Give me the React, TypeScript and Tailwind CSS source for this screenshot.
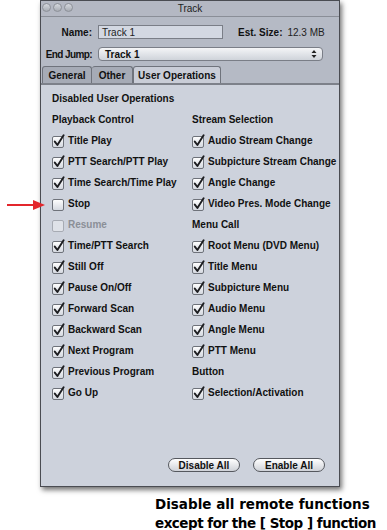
const leftItems: { label: string; checked: boolean; disabled?: boolean }[] = [
  { label: 'Title Play', checked: true },
  { label: 'PTT Search/PTT Play', checked: true },
  { label: 'Time Search/Time Play', checked: true },
  { label: 'Stop', checked: false },
  { label: 'Resume', checked: false, disabled: true },
  { label: 'Time/PTT Search', checked: true },
  { label: 'Still Off', checked: true },
  { label: 'Pause On/Off', checked: true },
  { label: 'Forward Scan', checked: true },
  { label: 'Backward Scan', checked: true },
  { label: 'Next Program', checked: true },
  { label: 'Previous Program', checked: true },
  { label: 'Go Up', checked: true },
];

type RightRow = { header: string } | { label: string };

const rightItems: RightRow[] = [
  { header: 'Stream Selection' },
  { label: 'Audio Stream Change' },
  { label: 'Subpicture Stream Change' },
  { label: 'Angle Change' },
  { label: 'Video Pres. Mode Change' },
  { header: 'Menu Call' },
  { label: 'Root Menu (DVD Menu)' },
  { label: 'Title Menu' },
  { label: 'Subpicture Menu' },
  { label: 'Audio Menu' },
  { label: 'Angle Menu' },
  { label: 'PTT Menu' },
  { header: 'Button' },
  { label: 'Selection/Activation' },
];

function CheckBox({ checked, disabled }: { checked: boolean; disabled?: boolean }) {
  return (
    <svg width="14" height="14" viewBox="0 0 14 14" className="shrink-0">
      <defs>
        <linearGradient id="cbg" x1="0" y1="0" x2="0" y2="1">
          <stop offset="0" stopColor="#ffffff" />
          <stop offset="1" stopColor="#d3d7df" />
        </linearGradient>
      </defs>
      <rect
        x="0.5"
        y="2.5"
        width="11"
        height="11"
        rx="1.5"
        fill={disabled ? '#dfe2e8' : 'url(#cbg)'}
        stroke={disabled ? '#a7abb3' : '#6e727a'}
      />
      {checked && (
        <path
          d="M2.8 7.6 L5.4 11 L11.6 1.2"
          fill="none"
          stroke="#1c1d20"
          strokeWidth="1.9"
          strokeLinecap="round"
          strokeLinejoin="round"
        />
      )}
    </svg>
  );
}

function Row({ label, checked, disabled }: { label: string; checked: boolean; disabled?: boolean }) {
  return (
    <div className="flex h-[21px] items-center gap-[2px] whitespace-nowrap">
      <CheckBox checked={checked} disabled={disabled} />
      <span className={disabled ? 'text-[#8b8f97]' : 'text-[#111]'}>{label}</span>
    </div>
  );
}

function Header({ children }: { children: string }) {
  return <div className="flex h-[21px] items-center whitespace-nowrap text-[#111]">{children}</div>;
}

export default function App() {
  return (
    <div className="relative h-[530px] w-[387px] overflow-hidden bg-white font-['Liberation_Sans',Arial,sans-serif] text-[10px]">
      <div className="ml-[40px] flex h-[487px] w-[300px] flex-col border border-[#4a4c52] bg-[#cdd2dc] shadow-[2px_3px_5px_rgba(0,0,0,0.55)]">
        {/* title bar */}
        <div className="relative flex h-[16px] items-center justify-center border-b border-[#8a8e97] bg-[#b4b8c3]">
          <div className="absolute left-[1px] top-[2px] flex gap-[2px]">
            {[0, 1, 2].map((i) => (
              <span
                key={i}
                className="h-[9px] w-[9px] rounded-full border border-[#8c9098] bg-gradient-to-b from-[#d6d9df] to-[#a7abb3]"
              />
            ))}
          </div>
          <span className="text-[#222]">Track</span>
        </div>

        {/* header fields */}
        <div className="bg-[#b5bac5] pt-[8px]">
          <div className="flex h-[14px] items-center whitespace-nowrap">
            <span className="w-[57px] shrink-0 pr-[6px] text-right font-bold text-[#111]">Name:</span>
            <div className="flex h-[14px] w-[125px] shrink-0 items-center border border-[#7a7e87] bg-[#d3d8e2] pl-[3px] text-[#222]">
              Track 1
            </div>
            <span className="ml-[15px] font-bold text-[#111]">Est. Size:</span>
            <span className="ml-[5px] text-[#222]">12.3 MB</span>
          </div>
          <div className="mt-[8px] flex h-[14px] items-center whitespace-nowrap">
            <span className="w-[57px] shrink-0 pr-[6px] text-right font-bold tracking-[-0.6px] text-[#111]">
              End Jump:
            </span>
            <div className="flex h-[14px] w-[225px] shrink-0 items-center justify-between rounded-[4px] border border-[#7a7e87] bg-gradient-to-b from-[#f4f5f7] to-[#cfd3da] pl-[6px] pr-[5px] font-bold text-[#111]">
              <span>Track 1</span>
              <svg width="6" height="10" viewBox="0 0 6 10">
                <path d="M3 1 L5.5 4 L0.5 4 Z M3 9 L5.5 6 L0.5 6 Z" fill="#222" />
              </svg>
            </div>
          </div>
          <div className="mt-[5px] flex h-[19px] items-end border-b-2 border-[#7d818a] pl-[1px]">
            <div className="flex h-[17px] w-[50px] items-center justify-center rounded-t-[3px] border border-b-0 border-[#6f737c] bg-[#a6abb6] font-bold text-[#111]">
              General
            </div>
            <div className="flex h-[17px] w-[41px] items-center justify-center rounded-t-[3px] border border-b-0 border-l-0 border-[#6f737c] bg-[#a6abb6] font-bold text-[#111]">
              Other
            </div>
            <div className="flex h-[17px] w-[88px] items-center justify-center rounded-t-[3px] border border-b-0 border-[#6f737c] bg-[#c9cdd7] font-bold text-[#111]">
              User Operations
            </div>
          </div>
        </div>

        {/* content */}
        <div className="flex flex-1 flex-col pl-[11px] pr-[10px] pt-[3px] font-bold">
          <Header>Disabled User Operations</Header>
          <div className="flex">
            <div className="w-[140px] shrink-0">
              <Header>Playback Control</Header>
              {leftItems.map((it) => (
                <Row key={it.label} label={it.label} checked={it.checked} disabled={it.disabled} />
              ))}
            </div>
            <div>
              {rightItems.map((it) =>
                'header' in it ? (
                  <Header key={it.header}>{it.header}</Header>
                ) : (
                  <Row key={it.label} label={it.label} checked />
                ),
              )}
            </div>
          </div>
          <div className="flex-1" />
          <div className="mb-[14px] mr-[4px] flex justify-end gap-[13px]">
            <button className="flex h-[14px] w-[72px] items-center justify-center rounded-full border border-[#55585e] bg-gradient-to-b from-[#ffffff] to-[#cfd2d8] font-bold text-[#111]">
              Disable All
            </button>
            <button className="flex h-[14px] w-[72px] items-center justify-center rounded-full border border-[#55585e] bg-gradient-to-b from-[#ffffff] to-[#cfd2d8] font-bold text-[#111]">
              Enable All
            </button>
          </div>
        </div>
      </div>

      <div className="ml-[155px] mt-[8px] whitespace-nowrap font-['DejaVu_Sans',sans-serif] text-[13.5px] font-bold leading-[19px] text-black">
        <div>Disable all remote functions</div>
        <div className="tracking-[-0.5px]">except for the [ Stop ] function</div>
      </div>

      {/* annotation arrow */}
      <svg className="absolute left-[6px] top-[198px]" width="40" height="14" viewBox="0 0 40 14">
        <path d="M1 7 H30" stroke="#e3262c" strokeWidth="2" />
        <path d="M39 7 L27 2 L27 12 Z" fill="#e3262c" />
      </svg>
    </div>
  );
}
